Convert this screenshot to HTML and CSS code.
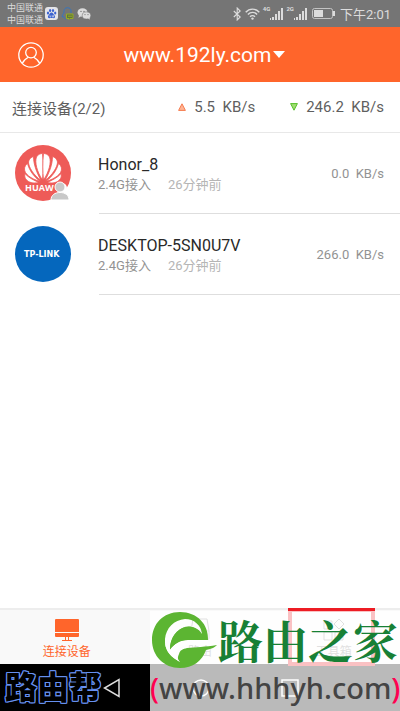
FILE: index.html
```html
<!DOCTYPE html>
<html lang="zh-CN">
<head>
  <meta charset="UTF-8" />
  <meta name="viewport" content="width=device-width, initial-scale=1.0"/>
  <title>连接设备</title>
  <link rel="stylesheet" href="styles.css">
</head>
<body>
  <div class="status-bar">
    <div class="carriers">
      <span>中国联通</span>
      <span>中国联通</span>
    </div>
    <div class="notices">
      <svg width="13" height="13" viewBox="0 0 13 13">
        <rect width="13" height="13" rx="3" fill="#e4e4e8"/>
        <g fill="#3b62d0">
          <ellipse cx="3" cy="6" rx="1.1" ry="1.5"/>
          <ellipse cx="5.1" cy="3.4" rx="1.1" ry="1.5"/>
          <ellipse cx="8" cy="3.4" rx="1.1" ry="1.5"/>
          <ellipse cx="10.2" cy="6" rx="1.1" ry="1.5"/>
          <path d="M6.5 5.6C8 5.6 8.4 7.4 9.6 8.4C10.8 10 9.6 11.4 8 11.1C7 10.8 6 10.8 5 11.1C3.4 11.4 2.2 10 3.4 8.4C4.6 7.4 5 5.6 6.5 5.6Z"/>
        </g>
        <path d="M5 8.3v1.6h1M7.2 8.2v1.7h1.4V8.2" fill="none" stroke="#e4e4e8" stroke-width=".7"/>
      </svg>
      <svg width="13" height="13" viewBox="0 0 13 13">
        <path d="M10 6V4C10 1.8 8.5.7 6.5.7S3 2 3 4v2C1.5 7.5.8 9 1.3 10L2.6 9.3C3 11 4 12 5 12" fill="none" stroke="#3775bd"/>
        <path d="M5.5 7H12v4.500H9L8 12.500V11.500H5.500z" fill="#60743c" stroke="#95ad22"/>
        <path d="M7 9.200h4" stroke="#95ad22"/>
      </svg>
      <svg width="14" height="12" viewBox="0 0 14 12">
        <ellipse cx="5.5" cy="4.5" rx="5" ry="4.2" fill="#dcdcdc"/>
        <path d="M2 7l-.5 3L4 8z" fill="#dcdcdc"/>
        <ellipse cx="9.5" cy="7.5" rx="4.3" ry="3.6" fill="#dcdcdc" stroke="#757575" stroke-width=".6"/>
        <path d="M11 10l1.500 1.800.2-2.500z" fill="#dcdcdc"/>
        <g fill="#757575"><circle cx="4" cy="3.4" r=".7"/><circle cx="7" cy="3.4" r=".7"/><circle cx="8" cy="6.6" r=".6"/><circle cx="11" cy="6.6" r=".6"/></g>
      </svg>
    </div>
    <div class="signals">
      <svg width="9" height="14" viewBox="0 0 9 14" fill="none" stroke="#dcdcdc" stroke-width="1.1">
        <path d="M.8 4l6.400 6-3 3V1l3 3L.8 10"/>
      </svg>
      <svg width="15" height="12" viewBox="0 0 15 12" fill="none" stroke="#dcdcdc" stroke-width="1.4">
        <path d="M.7 4.300C4.500.1 10.500.1 14.300 4.300M2.900 6.500C5.500 3.700 9.500 3.700 12.100 6.500M5 8.700C6.500 7.200 8.500 7.200 10 8.700"/>
        <circle cx="7.5" cy="10.6" r="1.2" fill="#dcdcdc" stroke="none"/>
      </svg>
      <span class="network">4G</span>
      <svg class="bars" width="13" height="12" viewBox="0 0 13 12" fill="#dcdcdc">
        <path d="M0 10h1v2H0zM2 9h2v3H2zM5 6h2v6H5zM8 3h2v9H8zM11 0h2v12h-2z"/>
      </svg>
      <span class="network">2G</span>
      <svg class="bars" width="13" height="12" viewBox="0 0 13 12" fill="#dcdcdc">
        <path d="M0 10h1v2H0zM2 9h2v3H2zM5 6h2v6H5zM8 3h2v9H8zM11 0h2v12h-2z"/>
      </svg>
      <svg class="battery" width="23" height="11" viewBox="0 0 23 11">
        <rect x=".5" y=".5" width="20" height="10" rx="2" fill="none" stroke="#c4c4c4"/>
        <path d="M2 2h9v7H2zM21 3h2v5h-2z" fill="#dcdcdc"/>
      </svg>
      <time>下午2:01</time>
    </div>
  </div>

  <header class="header">
    <button class="account" type="button" aria-label="账号">
      <svg width="26" height="26" viewBox="0 0 26 26" fill="none" stroke="#fff" stroke-width="1.3">
        <circle cx="13" cy="13" r="12.2"/>
        <circle cx="13" cy="10.6" r="5.3"/>
        <path d="M4.200 21.400C5.500 18.300 8 16.600 10.300 15.300M15.700 15.300C18 16.600 20.500 18.300 21.800 21.400"/>
      </svg>
    </button>
    <button class="router" type="button">www.192ly.com<span class="caret"></span></button>
  </header>

  <main class="main">
    <section class="summary">
      <h1 class="count">连接设备(2/2)</h1>
      <span class="rate up">
        <svg width="8" height="8" viewBox="0 0 8 8"><path d="M4 .8L7.400 7.400H.6z" fill="#ffb494" stroke="#f57b4e"/></svg>
        5.5&nbsp; KB/s
      </span>
      <span class="rate down">
        <svg width="8" height="8" viewBox="0 0 8 8"><path d="M.6.6h6.800L4 7.200z" fill="#a0dd72" stroke="#55bf28"/></svg>
        246.2&nbsp; KB/s
      </span>
    </section>

    <ul class="devices">
      <li class="device">
        <svg class="logo" width="56" height="56" viewBox="0 0 56 56">
          <circle cx="28" cy="28" r="28" fill="#ee5b58"/>
          <g id="petals" fill="#fff" stroke="#ee5b58" stroke-width=".8">
            <path d="M27.500 35C22 27 19.500 17 21.500 12C23 9 26 8.500 27.500 8.500C28.500 17 28.300 27 27.500 35Z"/>
            <path d="M26 35.500C18.500 30 13.500 22 13.500 17C13.800 14 16.500 12 18.500 11.500C18.500 20 22 28 26 35.500Z"/>
            <path d="M25 36.500C15.500 33.500 9.500 29 9.500 24C9.500 21.500 11 19.500 12.500 18.500C14.500 26 19 31.500 25 36.500Z"/>
            <path d="M24 37.500C17 39 11.500 37 9.800 32L9.800 28.500C14 33 18.500 35 24 37.500Z"/>
          </g>
          <use href="#petals" transform="matrix(-1 0 0 1 56 0)"/>
          <text class="huawei" x="10" y="46">HUAW</text>
          <circle cx="47" cy="43" r="5" fill="#fff"/>
          <path d="M36 55C36 50 40 47.500 45 47.500S54 50 54 55z" fill="#c8c8c8" stroke="#fff"/>
          <circle cx="45" cy="42" r="5" fill="#c8c8c8" stroke="#fff"/>
        </svg>
        <div class="info">
          <h2>Honor_8</h2>
          <p>2.4G接入<span class="ago">26分钟前</span></p>
        </div>
        <span class="speed">0.0&nbsp; KB/s</span>
      </li>
      <li class="device">
        <svg class="logo" width="56" height="56" viewBox="0 0 56 56">
          <circle cx="28" cy="28" r="28" fill="#0567bd"/>
          <text class="tplink" x="9" y="31">TP-LINK</text>
        </svg>
        <div class="info">
          <h2>DESKTOP-5SN0U7V</h2>
          <p>2.4G接入<span class="ago">26分钟前</span></p>
        </div>
        <span class="speed">266.0&nbsp; KB/s</span>
      </li>
    </ul>
  </main>

  <footer class="footer">
    <nav class="tabs">
      <a class="tab active" href="#devices">
        <svg width="24" height="24" viewBox="0 0 24 24" fill="#ff652b">
          <path d="M1 1h22q1 0 1 1v12H0V2q0-1 1-1zM0 15h24v3q0 1-1 1H1q-1 0-1-1zM10 19h1v3h-1zM13 19h1v3h-1zM7 22h10v1H7z"/>
        </svg>
        连接设备
      </a>
      <a class="tab" href="#router">
        <svg width="24" height="24" viewBox="0 0 24 24" fill="none" stroke="#8b8b8b">
          <path d="M5 1h14l2 12H3zM3 13v7q0 2 2 2h14q2 0 2-2v-7M5 18h14"/>
        </svg>
        路由
      </a>
      <a class="tab marked" href="#tools">
        <svg width="24" height="24" viewBox="0 0 24 24" fill="none" stroke="#8b8b8b">
          <path d="M2 3h8v8H2zM2 14h8v8H2zM13 14h8v8h-8zM17 1l5 5-5 5-5-5z"/>
        </svg>
        工具箱
      </a>
    </nav>
    <div class="system-nav">
      <span class="brand">路由帮</span>
      <button class="back" type="button" aria-label="返回">
        <svg width="18" height="20" viewBox="0 0 18 20" fill="none" stroke="#dedede" stroke-width="1.5"><path d="M16 1.500v17L1.500 10z"/></svg>
      </button>
      <button class="home" type="button" aria-label="主页">
        <svg width="18" height="18" viewBox="0 0 18 18" fill="none" stroke="#fff" stroke-width="1.5"><circle cx="9" cy="9" r="8"/></svg>
      </button>
      <button class="recent" type="button" aria-label="最近任务">
        <svg width="18" height="18" viewBox="0 0 18 18" fill="none" stroke="#fff" stroke-width="1.5"><path d="M1 1h16v16H1z"/></svg>
      </button>
    </div>
    <div class="watermark">
      <div class="site">
        <svg width="66" height="58" viewBox="0 0 66 58">
          <path d="M57 30C58 13 46 1 29 1C12 1 1 13 1 29C1 45 13 57 29 57C42 57 51 50 55 39C61 38 64 36 66 34C54 36 45 36 36 37C32 38 29 39 28 43C26 47 27 49 29 51C20 46 13 39 14 28C15 17 23 9 34 8C43 8 50 14 51 23C44 14 34 13 27 20C21 25 19 32 19 39C23 33 29 29 37 29Z" fill="#5cb532"/>
          <path d="M19 39C23 33 29 29 37 29H57V34H38C30 34 26 38 25 43Q26 48 29 51C20 46 15 41 14 32Z" fill="#fff"/>
          <path d="M19 38C19 28 25 17 36 16C44 15 49 19 51 24C52 27 51 29 49 29H37C29 29 23 33 19 38Z" fill="#5cb532"/>
        </svg>
        <span class="name">路由之家</span>
      </div>
      <div class="url"><span>(</span>www.hhhyh.com<span>)</span></div>
    </div>
  </footer>
</body>
</html>
```
FILE: styles.css
```css
* {
  box-sizing: border-box;
}
body {
  margin: 0;
  min-height: 100vh;
  display: flex;
  flex-direction: column;
  background: #fff;
  font-family: Roboto, 'Noto Sans CJK SC', sans-serif;
}
svg {
  display: block;
  flex: none;
}
button {
  padding: 0;
  border: none;
  background: none;
  font: inherit;
  color: inherit;
  cursor: pointer;
}
.status-bar {
  height: 27px;
  display: flex;
  justify-content: space-between;
  padding: 0 9px 0 7px;
  background: #757575;
  color: #dcdcdc;
}
.carriers {
  display: flex;
  flex-direction: column;
  padding-top: 2px;
  font-size: 9px;
  line-height: 12px;
}
.notices {
  flex: 1;
  display: flex;
  align-items: center;
  gap: 3px;
  padding-left: 2px;
}
.signals {
  display: flex;
  align-items: center;
  gap: 3px;
}
.network {
  align-self: flex-start;
  padding-top: 5px;
  font-size: 6px;
  line-height: 8px;
  font-weight: bold;
}
.bars {
  margin-left: -3px;
}
.battery {
  margin-left: 2px;
}
.signals time {
  padding-left: 2px;
  font-size: 13px;
}
.header {
  height: 55px;
  display: grid;
  grid-template-columns: 1fr auto 1fr;
  align-items: center;
  padding: 0 9px 0 18px;
  background: #ff652b;
  color: #fff;
}
.router {
  display: flex;
  align-items: center;
  gap: 2px;
  font-size: 21px;
}
.caret {
  border: 6px solid transparent;
  border-top: 7px solid #fff;
  border-bottom: none;
}
.main {
  flex: 1;
}
.summary {
  height: 51px;
  display: flex;
  align-items: center;
  padding: 0 16px 0 12px;
  border-bottom: 1px solid #e8e8e8;
  color: #5f5f5f;
}
.count {
  flex: 1;
  margin: 0;
  font-size: 15px;
  font-weight: normal;
}
.rate {
  display: flex;
  align-items: center;
  gap: 8px;
  font-size: 15px;
}
.down {
  margin-left: 35px;
}
.devices {
  margin: 0;
  padding: 0;
  list-style: none;
}
.device {
  height: 81px;
  display: flex;
  align-items: center;
  padding: 0 16px 2px 15px;
  background: linear-gradient(#dedede, #dedede) 99px 100% / 100% 1px no-repeat;
}
.info {
  flex: 1;
  padding: 4px 0 0 27px;
}
.info h2 {
  margin: 0;
  font-size: 16px;
  line-height: 20px;
  font-weight: normal;
  color: #292929;
}
.info p {
  margin: 0;
  font-size: 13px;
  line-height: 20px;
  color: #929292;
}
.ago {
  margin-left: 17px;
  color: #b5b5b5;
}
.speed {
  padding-top: 2px;
  font-size: 13px;
  color: #929292;
}
.huawei {
  font: bold 9px 'Open Sans', sans-serif;
  fill: #fff;
}
.tplink {
  font: bold 8px 'DejaVu Sans', sans-serif;
  fill: #fff;
}
.footer {
  position: relative;
}
.tabs {
  height: 56px;
  display: grid;
  grid-template-columns: repeat(3, 1fr);
  border-top: 2px solid #ededed;
  background: #f9f9f9;
}
.tab {
  display: flex;
  flex-direction: column;
  align-items: center;
  padding-top: 8px;
  gap: 1px;
  font-size: 12px;
  line-height: 18px;
  color: #8b8b8b;
  text-decoration: none;
}
.active {
  color: #ff652b;
}
.marked {
  position: relative;
  margin: -2px 25px -2px 21px;
  padding: 6px 0 0 5px;
  border: 4px solid #ed1c24;
}
.system-nav {
  height: 47px;
  display: flex;
  align-items: center;
  gap: 71px;
  background: #000;
}
.brand {
  width: 103px;
  margin-right: -71px;
  padding-left: 5px;
  font-size: 32px;
  line-height: 40px;
  font-weight: 900;
  color: #000;
  text-shadow: 1px 0 #6690f0, -1px 0 #6690f0, 0 1px #6690f0, 0 -1px #6690f0,
    1px 1px #6690f0, -1px -1px #6690f0, 1px -1px #6690f0, -1px 1px #6690f0;
}
.watermark {
  position: absolute;
  right: 0;
  bottom: 0;
  width: 250px;
  height: 100px;
  background: rgba(255, 255, 255, 0.73);
}
.site {
  height: 57px;
  display: flex;
  align-items: center;
  gap: 1px;
  padding-left: 1px;
}
.name {
  font-family: 'Noto Serif CJK SC', 'Noto Sans CJK SC', sans-serif;
  font-size: 45px;
  line-height: 54px;
  font-weight: bold;
  color: #178035;
  white-space: nowrap;
}
.url {
  font-family: 'Noto Sans', sans-serif;
  font-size: 29px;
  line-height: 40px;
  font-weight: 500;
  text-align: center;
  white-space: nowrap;
  color: #444;
}
.url span {
  color: #ff0050;
}
```
